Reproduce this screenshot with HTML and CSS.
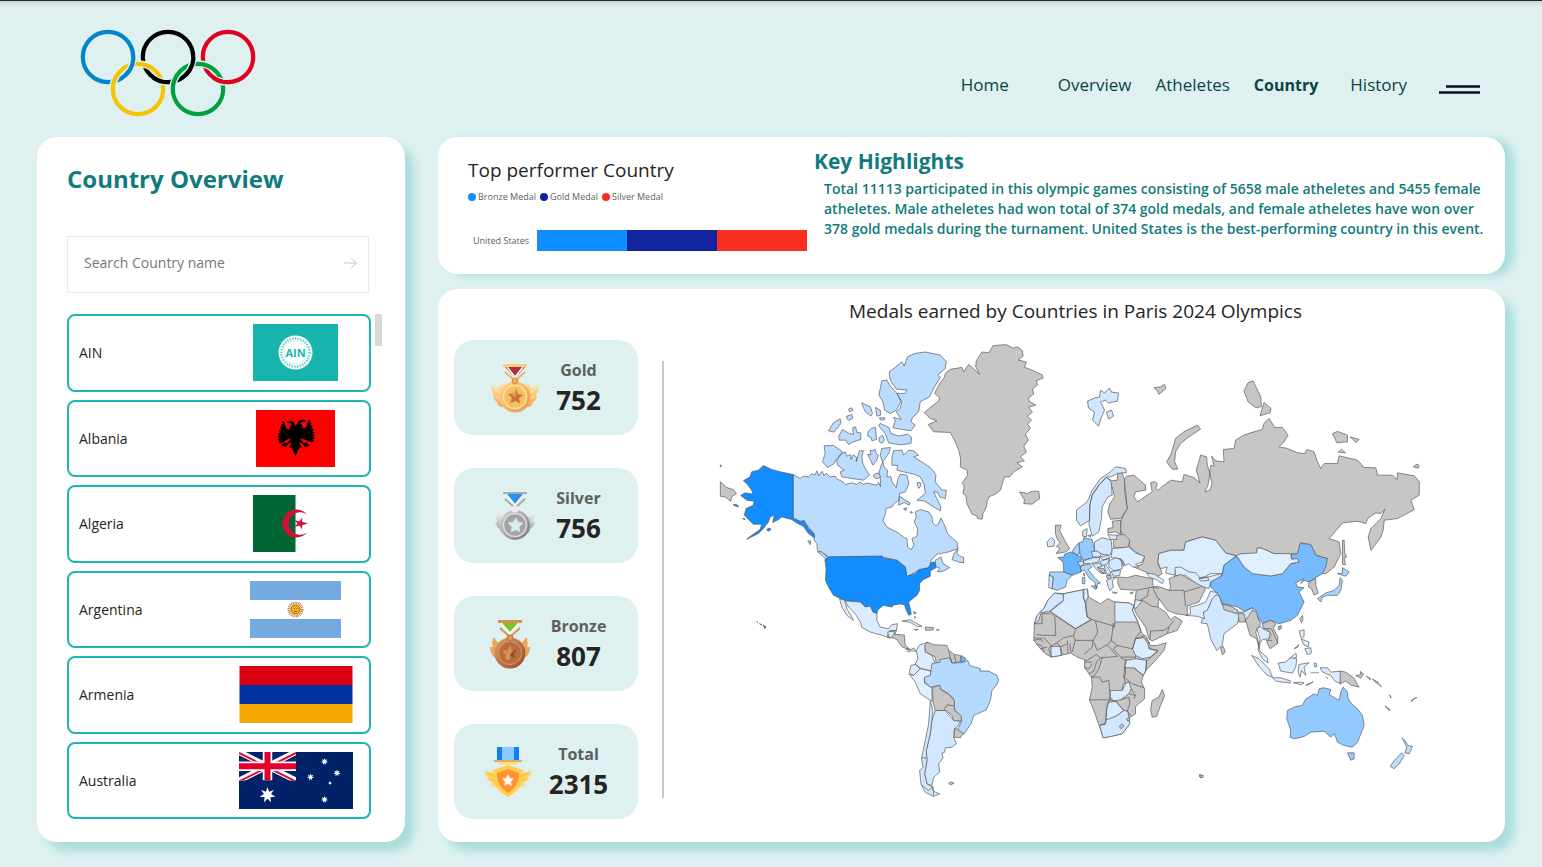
FILE: index.html
```html
<!DOCTYPE html>
<html lang="en">
<head>
<meta charset="utf-8">
<title>Country Overview</title>
<link rel="stylesheet" href="styles.css">
</head>
<body>
<div class="page">
  <header class="header">
    <svg class="rings" viewBox="80 29 176 88" role="img" aria-label="Olympic rings">
      <g fill="none" stroke-width="4.2">
        <circle cx="108" cy="57" r="25.2" stroke="#0485cb"/>
        <circle cx="168" cy="57" r="25.2" stroke="#000"/>
        <circle cx="228" cy="57" r="25.2" stroke="#e0001f"/>
        <circle cx="138" cy="89" r="25.2" stroke="#def1f0" stroke-width="7"/>
        <circle cx="198" cy="89" r="25.2" stroke="#def1f0" stroke-width="7"/>
        <circle cx="138" cy="89" r="25.2" stroke="#f6c300"/>
        <circle cx="198" cy="89" r="25.2" stroke="#00a03c"/>
        <g stroke="#def1f0" stroke-width="7">
          <path d="M132.9 55A25.2 25.2 0 0 1 129 71"/><path d="M192.9 55A25.2 25.2 0 0 1 189 71"/>
          <path d="M168 82.2A25.2 25.2 0 0 1 157 80"/><path d="M228 82.2A25.2 25.2 0 0 1 217 80"/>
        </g>
        <path stroke="#0485cb" d="M132.9 52.6A25.2 25.2 0 0 1 126 74.8"/>
        <path stroke="#000" d="M192.9 52.6A25.2 25.2 0 0 1 186 74.8M168.6 82.2A25.2 25.2 0 0 1 153.5 77.7"/>
        <path stroke="#e0001f" d="M228.6 82.2A25.2 25.2 0 0 1 213.5 77.7"/>
      </g>
    </svg>
    <nav class="nav">
      <a class="nav-home" href="#">Home</a>
      <a href="#">Overview</a>
      <a href="#">Atheletes</a>
      <a class="current" href="#">Country</a>
      <a class="nav-history" href="#">History</a>
      <button class="menu" type="button" aria-label="Menu">
        <svg viewBox="0 0 42 12"><path d="M7 2.5h34M0 8.5h41" stroke="#0b0b18" stroke-width="2.6"/></svg>
      </button>
    </nav>
  </header>

  <main class="board">
    <aside class="panel sidebar">
      <h1>Country Overview</h1>
      <form class="search">
        <input type="text" placeholder="Search Country name" aria-label="Search Country name">
        <button type="button" aria-label="Search"><svg viewBox="0 0 14 12"><path d="M0 6h12M7 1l5.500 5L7 11" fill="none" stroke="#c4c4c4"/></svg></button>
      </form>
      <div class="list-wrap">
        <ul class="countries">
          <li><span>AIN</span>
            <svg class="flag" viewBox="0 0 114 57"><path fill="#16b4ac" d="M14 0h85v57H14z"/><circle cx="56.500" cy="28.500" r="17" fill="#fff"/><circle cx="56.500" cy="28.500" r="14" fill="none" stroke="#16b4ac" stroke-width="2.600" stroke-dasharray="1.500 1.200" opacity=".6"/><circle cx="56.500" cy="28.500" r="11.500" fill="#fff" stroke="#9ddfdb" stroke-width=".5"/><text class="ain" x="56.500" y="32.500" text-anchor="middle">AIN</text></svg></li>
          <li><span>Albania</span>
            <svg class="flag" viewBox="0 0 114 57"><path fill="#f00" d="M17 0h79v57H17z"/>
              <path d="M56.500 16l-2-4-4-1.500-3 1 1 2 3-.5 1.500 2-2 2-1 3-3-2-2-7-2 1 1 2h-2l1 3h-2l1 3h-2l1 3-2 .2 1.500 2.800-2 .3 2 2.500-2 .5 2.500 2-2 1 3 1.200L49 29l3-.5-4 4.500-3-.5-3 4 3-1 1 2 4-4 3-1-3 5 2.500-.5.5 3 1.500-1v3l2 4 2-4v-3l1.500 1 .5-3 2.500.5-3-5 3 1 4 4 1-2 3 1-3-4-3 .5-4-4.500 3 .5 8.500 3.200 3-1.200-2-1 2.500-2-2-.5 2-2.500-2-.3 1.500-2.800-2-.2 1-3h-2l1-3h-2l1-3h-2l1-2-2-1-2 7-3 2-1-3-2-2 1.500-2 3 .5 1-2-3-1-4 1.500z"/></svg></li>
          <li><span>Algeria</span>
            <svg class="flag" viewBox="0 0 114 57"><path fill="#063" d="M14 0h42.500v57H14z"/><path fill="#d21034" d="M68 19.500a14 14 0 1 0 0 18a11.300 11.300 0 1 1 0-18zM69 28.500l-6-1.800.3-4.200-3 4-5-1.600 3.200 3.600-3.200 3.600 5-1.600 3 4-.3-4.200z"/></svg></li>
          <li><span>Argentina</span>
            <svg class="flag" viewBox="0 0 114 57"><path fill="#74aadf" d="M11 0h91v19H11zM11 38h91v19H11z"/><circle cx="56.500" cy="28.500" r="6.500" fill="none" stroke="#c08a4a" stroke-width="3" stroke-dasharray="1 .7"/><circle cx="56.500" cy="28.500" r="4.500" fill="#f6b40e" stroke="#a8620c"/><path d="M55 27.500h1m1.500 0h1M55 30.500h3" stroke="#85340a" stroke-width=".7"/></svg></li>
          <li><span>Armenia</span>
            <svg class="flag" viewBox="0 0 114 57"><path fill="#d90012" d="M.5 0h113v19H.5z"/><path fill="#0033a0" d="M.5 19h113v19H.5z"/><path fill="#f2a800" d="M.5 38h113v19H.5z"/></svg></li>
          <li><span>Australia</span>
            <svg class="flag" viewBox="0 0 114 57">
              <defs><clipPath id="canton"><path d="M0 0h57v28.500H0z"/></clipPath>
              <path id="star" d="M0-8l1.600 4.800L6.300-5 3.600-.9 7.800 1.800 2.900 2.300 3.500 7.200 0 3.700-3.500 7.200-2.900 2.300-7.800 1.800-3.600-.9-6.300-5-1.600-3.200z"/></defs>
              <path fill="#012169" d="M0 0h114v57H0z"/>
              <g clip-path="url(#canton)"><path d="M0 0l57 28.500M57 0L0 28.500" stroke="#fff" stroke-width="6"/><path d="M0 1l57 28.500M57 1L0 29.500" stroke="#e4002b" stroke-width="2"/><path d="M28.500 0v28.500M0 14.200h57" stroke="#fff" stroke-width="9.500"/><path d="M28.500 0v28.500M0 14.200h57" stroke="#e4002b" stroke-width="6"/></g>
              <g fill="#fff"><use href="#star" x="28.500" y="43"/><use href="#star" transform="translate(85.500 9.500) scale(.45)"/><use href="#star" transform="translate(98 21) scale(.45)"/><use href="#star" transform="translate(71.500 25) scale(.45)"/><use href="#star" transform="translate(91 31) scale(.25)"/><use href="#star" transform="translate(85.500 47.500) scale(.45)"/></g>
            </svg></li>
        </ul>
        <div class="thumb"></div>
      </div>
    </aside>

    <div class="content">
      <section class="panel highlights">
        <div class="chart">
          <h2>Top performer Country</h2>
          <ul class="legend">
            <li><i class="dot bronze"></i>Bronze Medal</li>
            <li><i class="dot gold"></i>Gold Medal</li>
            <li><i class="dot silver"></i>Silver Medal</li>
          </ul>
          <div class="bar-row">
            <span>United States</span>
            <div class="bar"><i class="bronze"></i><i class="gold"></i><i class="silver"></i></div>
          </div>
        </div>
        <div class="key">
          <h2>Key Highlights</h2>
          <p>Total 11113 participated in this olympic games consisting of 5658 male atheletes and 5455 female atheletes. Male atheletes had won total of 374 gold medals, and female atheletes have won over 378 gold medals during the turnament. United States is the best-performing country in this event.</p>
        </div>
      </section>

      <section class="panel medals">
        <div class="stats">
          <article class="stat">
            <svg class="medal" viewBox="0 0 50 50">
              <defs>
                <linearGradient id="gG" x2="1" y2="1"><stop stop-color="#ffd98a"/><stop offset="1" stop-color="#e8954a"/></linearGradient>
                <linearGradient id="gW" x2="0" y2="1"><stop stop-color="#ffe7a8"/><stop offset="1" stop-color="#f2ab55"/></linearGradient>
              </defs>
              <path fill="url(#gW)" d="M1 22c3 2 6 2 8 3l2-6 4 4 4-2h12l4 2 4-4 2 6c2-1 5-1 8-3 0 5-1 8-3 10l1 1c0 3-2 5-4 6 0 3-3 5-6 5H13c-3 0-6-2-6-5-2-1-4-3-4-6l1-1c-2-2-3-5-3-10z"/>
              <path fill="none" stroke="#fbf0c4" d="M3 24l8 7M5 33l6 3M47 24l-8 7M45 33l-6 3"/>
              <path fill="#f5cd7c" d="M13 1h24v3H13z"/><path fill="#b92e3c" d="M15 4h20L25 15z"/><path fill="none" stroke="#fff" stroke-width="1.500" d="M17 4l8 10 8-10"/><path fill="none" stroke="#edb462" stroke-width="2" d="M15 9l10 9 10-9"/>
              <circle cx="25" cy="34" r="15.500" fill="url(#gG)"/><circle cx="25" cy="34" r="11.500" fill="#f8bd62" stroke="#ffe09a" stroke-width="1.500"/><circle cx="25" cy="18" r="3" fill="#efae5b" stroke="#d28c40"/>
              <path fill="#c87537" d="M26 26l2 5 5 1-4 3 1 6-4-3-6 2 2-5-4-4 6 0z"/><path fill="#e59a4c" d="M26 34l-8-4 6 0 2-4z"/>
            </svg>
            <div><h3>Gold</h3><strong>752</strong></div>
          </article>
          <article class="stat">
            <svg class="medal" viewBox="0 0 50 50">
              <defs><linearGradient id="sG" x2="1" y2="1"><stop stop-color="#d8d8d8"/><stop offset="1" stop-color="#767676"/></linearGradient>
              <linearGradient id="sW" x2="0" y2="1"><stop stop-color="#f5f5f5"/><stop offset="1" stop-color="#999"/></linearGradient></defs>
              <path fill="url(#sW)" d="M5 21c3 3 6 3 8 6h24c2-3 5-3 8-6 0 5-1 8-3 10h3c-1 4-3 6-5 7 0 3-2 4-5 4H15c-3 0-5-1-5-4-2-1-4-3-5-7h3c-2-2-3-5-3-10z"/>
              <path fill="#aaa" d="M13 1h24v2H13z"/><path fill="#2a91ef" d="M15 3h20L25 14z"/><path fill="none" stroke="#fff" stroke-width="1.500" d="M16 3l9 11 9-11"/><path fill="none" stroke="#aaa" stroke-width="2" d="M15 8l10 9 10-9"/>
              <circle cx="25" cy="34" r="15" fill="url(#sG)"/><circle cx="25" cy="34" r="11.500" fill="#a3a3a3" stroke="#ddd" stroke-width="1.500"/><circle cx="25" cy="18" r="3.500" fill="#ededed"/>
              <path fill="#ddedf2" stroke="#c2dbe3" d="M26 27l2 4 5 1-4 4 1 5-4-2-5 2 1-5-4-4 5-1z"/>
            </svg>
            <div><h3>Silver</h3><strong>756</strong></div>
          </article>
          <article class="stat">
            <svg class="medal" viewBox="0 0 50 50">
              <defs><linearGradient id="bG" x2="1" y2="1"><stop stop-color="#e0a05e"/><stop offset="1" stop-color="#98482d"/></linearGradient></defs>
              <path fill="#e9a55c" d="M9 18c1 3 4 5 6 8h20c2-3 5-5 6-8 2 4 2 7 1 10h3c0 5-2 9-6 11H11c-4-2-6-6-6-11h3c-1-3-1-6 1-10z"/>
              <path fill="#d4924e" d="M13 1h24v3H13z"/><path fill="#7cc32c" d="M15 4h20L25 14z"/><path fill="none" stroke="#fff" stroke-width="1.500" d="M16 4l9 10 9-10"/><path fill="none" stroke="#d99449" stroke-width="2" d="M15 9l10 9 10-9"/>
              <circle cx="25" cy="34" r="15.500" fill="url(#bG)"/><circle cx="25" cy="34" r="11.500" fill="#b96b3d" stroke="#d99a62"/><circle cx="25" cy="19" r="3" fill="#dd9650" stroke="#b9743c"/>
              <path fill="#d59355" d="M25 26l2 5 1 1-3 4 0 5-5-1 1-4-4-4 6-1z"/><path fill="#9a4b2c" d="M28 32l4-2-3 5 1 5-5-4z"/>
            </svg>
            <div><h3>Bronze</h3><strong>807</strong></div>
          </article>
          <article class="stat">
            <svg class="medal" viewBox="0 0 50 50">
              <path fill="#ffd45e" d="M0 24l15 2v15l-7-3 2-2-7-4 3-1-5-4 3 0zM50 24l-15 2v15l7-3-2-2 7-4-3-1 5-4-3 0z"/>
              <path fill="none" stroke="#f3b73a" d="M4 26l11 5M7 32l8 4M46 26l-11 5M43 32l-8 4"/>
              <path fill="#0d7ff9" d="M14 0h22v14H14z"/><path fill="#8ac8ff" d="M19 0h12v14H19z"/><path fill="#e9ad62" d="M11 13h28v2H11z"/><path fill="#ffe08a" d="M13 15h24l-4 3H17z"/>
              <path fill="#ffcf4d" d="M25 18l15 5c0 14-4 21-15 27-11-6-15-13-15-27z"/><path fill="#ff9331" d="M25 22l11 4c0 9-3 15-11 20-8-5-11-11-11-20z"/><path fill="#fff3ee" d="M25 27l2 4 4 .5-3 3.500 1 4-4-2-4 2 1-4-3-3.500 4-.5z"/>
            </svg>
            <div><h3>Total</h3><strong>2315</strong></div>
          </article>
        </div>
        <div class="map-area">
          <h2>Medals earned by Countries in Paris 2024 Olympics</h2>
          <svg class="map" viewBox="719 343 702 456" role="img" aria-label="World map of medals">
            <!-- North America -->
            <g transform="translate(700 330) scale(.33333)">
              <g class="ca">
                <path d="M279 433L300 445 310 438 325 440 335 431 345 434 350 422 356 437 366 423 372 437 378 429 390 440 405 438 412 447 428 455 436 463 455 458 470 463 478 455 490 463 500 458 515 462 530 465 535 456 541 470 541 450 536 428 542 408 548 395 552 412 562 420 560 440 572 440 575 455 588 472 592 450 600 432 620 435 626 460 615 485 598 490 596 510 582 520 575 530 557 535 556 550 548 570 560 590 578 600 590 605 612 622 620 625 622 650 633 658 641 645 635 625 650 618 652 595 642 575 648 558 645 545 660 538 685 545 695 560 697 577 707 587 715 580 722 563 735 590 742 612 770 635 773 655 745 665 710 672 692 690 690 712 655 720 620 740 615 710 590 690 548 680 385 680 375 672 352 660 350 640 342 630 342 610 325 590 312 575 300 577 279 563z"/>
                <path d="M567 125L585 112 605 95 612 108 622 80 645 70 675 66 720 75 738 95 735 115 712 135 720 142 700 175 688 200 660 215 655 245 637 262 632 275 645 285 632 302 600 297 578 293 585 272 580 262 603 268 588 245 600 235 605 215 590 190 615 190 620 180 588 177 570 150z"/>
                <path d="M545 152L560 150 568 165 590 190 602 215 588 240 570 250 553 240 548 215 536 195zM484 218L510 230 517 250 512 258 495 245zM445 237L455 233 458 241 448 245zM440 258L455 253 458 265 446 271 440 266zM526 232L540 240 542 255 530 258zM538 263L553 263 552 270 540 269zM385 302L400 278 420 266 422 280 402 306zM416 318L427 298 447 310 460 313 457 294 466 290 470 307 482 308 482 328 460 335 445 343 437 330 417 330zM503 305L515 294 526 292 529 328 515 332 513 322 503 318zM535 287L540 280 566 292 572 310 595 318 622 312 634 322 632 340 600 344 565 338 555 310zM537 322L547 316 553 330 545 340 536 334zM372 347L400 346 427 365 410 385 402 400 382 412 367 395 375 370zM425 370L435 365 440 378 452 374 452 388 460 374 470 382 468 395 478 362 490 362 485 377 488 400 495 415 508 435 490 450 455 445 425 440 420 425 432 420 412 405 410 390zM502 372L512 375 510 360 520 362 524 357 528 370 534 375 530 390 518 405 510 388zM545 355L570 352 568 365 555 385 547 395 540 375zM522 432L535 428 541 440 530 446 520 440zM580 362L605 360 610 375 625 360 640 362 655 375 640 380 672 400 690 412 707 433 705 455 725 480 738 480 735 505 718 500 712 486 700 485 712 510 722 530 720 542 700 530 672 512 650 510 675 490 672 465 660 440 640 432 610 425 590 420 592 406 575 405 575 385zM650 458L660 457 662 468 655 475zM598 498L612 508 628 517 627 525 612 517 595 525zM610 535L620 533 616 542zM632 543L637 547 630 548zM705 690L722 680 728 700 740 707 748 712 730 722 712 725 718 712 707 710zM773 656L762 668 755 688 775 695 790 698 790 682 780 678 770 670zM323 632L332 632 330 643zM352 664L365 665 385 684 378 686z"/>
              </g>
              <path class="us" d="M190 406L215 418 240 425 279 433 279 563 300 573 312 571 325 595 342 612 342 622 325 610 310 588 290 578 275 568 245 560 235 568 218 577 223 555 210 560 205 575 190 595 175 610 140 627 155 615 180 598 185 582 160 582 150 572 133 555 138 535 160 525 162 513 140 510 122 496 135 488 158 492 155 480 140 460 130 452 150 440 155 425 175 420zM385 680L545 677 550 684 590 690 615 710 620 738 645 730 655 718 685 712 692 697 703 695 707 712 690 722 690 738 668 748 658 760 658 780 650 795 625 815 630 835 633 852 626 855 618 840 613 823 600 821 580 824 575 830 550 825 533 838 530 850 518 845 510 828 495 830 480 815 440 812 418 803 400 795 385 770 376 750 378 715 374 688zM100 522L112 524 116 530 102 526zM128 565h6v4zM200 597l10-4 2 6-8 4zM190 884l7 5-3 6zM170 874l4 2zM178 880l8 4z"/>
              <path class="l2" d="M418 805L440 812 480 815 495 830 510 828 518 845 530 850 530 870 540 890 565 895 575 883 592 880 588 902 570 900 560 920 540 913 510 905 484 890 482 878 465 850 445 830 434 812 440 835 458 865 460 870 440 855 425 830z"/>
              <path class="none" d="M900 45L918 44 938 54 952 51 966 62 968 78 954 90 978 96 972 112 988 117 1026 135 1028 144 1008 152 1011 165 996 177 1000 192 984 204 987 214 1006 225 985 232 996 246 981 258 993 270 982 282 990 295 975 312 984 330 970 348 978 366 960 380 972 392 950 398 966 410 940 425 928 440 912 440 900 480 888 490 866 500 860 515 858 530 848 550 845 567 832 565 828 556 815 552 800 520 796 495 788 490 792 465 785 460 802 435 800 420 780 410 781 385 775 360 765 335 750 307 700 305 684 283 710 272 690 265 672 248 690 232 715 213 718 203 703 190 718 160 732 142 735 130 750 118 785 112 790 125 805 103 838 133 826 110 828 92 845 66 865 68 878 47zM61 455L80 472 100 478 109 490 95 500 92 514 75 500 61 498zM61 404l4 3-4 4z"/>
            </g>

            <!-- South and Central America -->
            <g transform="translate(880 600) scale(.33333)">
              <path class="none" d="M30 92L48 90 44 102 72 104 75 135 90 147 80 145 66 140 50 118 38 112 22 112 24 102zM102 87h12l-8 3zM135 80l25 2-2 7-22 1zM168 88h8v2zM100 34l8 4-6 3zM104 48v6zM140 125L160 133 200 135 205 150 222 162 240 165 243 183 215 188 190 185 168 190 165 170 135 155 133 135zM205 548l8-4 8 4-10 5zM957 523l10 3-4 6-6-3z"/>
              <path class="l2" d="M22 95L40 92 42 102 28 114zM78 145l10 4 12-6 8 10-14-2-10 4zM66 62L90 58 125 78 110 78 90 66z"/>
              <path class="l2" d="M118 133L130 130 142 126 133 135 135 155 155 165 165 190 155 212 120 203 105 190 113 175 108 150zM92 195L105 192 120 205 100 225 87 218z"/>
              <path class="l3" d="M87 222L100 225 120 205 152 212 150 228 132 235 133 248 155 262 155 303 120 280 105 245z"/>
              <path class="fr" d="M243 165L257 175 250 187 241 183z"/>
              <path class="br" d="M155 190L180 185 178 178 207 172 215 188 243 187 262 180 268 195 300 205 300 212 325 212 350 225 355 240 350 252 335 270 330 300 318 328 280 345 272 370 250 402 232 388 243 365 235 345 222 325 220 295 205 280 180 265 178 255 150 260 133 245 133 230 150 225z"/>
              <path class="none" d="M157 262L178 254 182 268 205 282 222 300 222 315 222 330 242 345 244 362 220 362 215 345 197 330 165 330 158 305zM224 382L248 398 240 412 220 410z"/>
              <path class="line" d="M190 330L200 313 222 316M205 150L210 170 215 188M222 162L226 185"/>
              <path class="l1" d="M165 330L195 330 220 360 240 362 232 378 222 385 220 410 228 430 215 440 195 442 193 455 185 458 188 472 175 490 178 515 160 530 155 555 140 550 133 520 140 480 138 450 150 400 155 360z"/>
              <path class="l1" d="M150 303L158 330 150 400 138 450 140 480 133 520 140 550 155 558 160 572 178 580 160 588 135 575 122 550 118 510 128 500 124 472 133 430 145 370z"/><path class="line" d="M124 553L145 570 158 557 160 586M124 472H138"/>
            </g>

            <!-- Africa -->
            <g transform="translate(1020 580) scale(.33333)">
              <path class="none" d="M102 38L130 40 190 28 202 28 203 50 240 70 262 55 283 65 325 68 340 75 335 90 350 120 362 155 385 185 388 196 410 195 437 187 430 210 405 240 378 268 368 285 362 305 372 325 372 355 345 378 345 400 325 412 328 430 305 460 270 468 248 472 238 440 232 425 222 395 207 358 215 320 213 290 192 262 193 238 170 230 150 218 122 225 92 230 75 220 60 205 40 180 42 130 50 105 70 85 82 60zM425 327L432 345 420 375 408 408 395 410 390 388 395 360 415 350z"/>
              <path class="l1" d="M102 38L128 42 130 60 105 78 88 93 62 97 55 120 42 130 50 105 70 85 82 60z"/>
              <path class="l2" d="M130 40L190 28 190 55 197 80 200 110 212 118 165 145 90 93 128 62zM188 28L200 25 203 50 195 65 188 50zM283 65L325 68 340 75 335 90 352 125 283 125z"/>
              <path class="l2" d="M92 198L120 198 122 225 92 230zM345 175L370 172 382 190 386 205 412 210 390 230 365 235 345 225 336 205zM315 240L345 235 378 240 376 268 368 285 340 262 312 262z"/>
              <path class="l2" d="M270 330L305 330 308 310 325 305 332 325 325 340 300 358 280 362 268 350zM260 367L285 362 310 390 290 405 270 415 256 418 258 390z"/>
              <path class="l1" d="M237 435L252 432 256 418 275 412 290 405 310 390 322 392 328 430 305 460 270 468 248 472z"/>
              <path class="none" d="M296 438l8-8 6 6-8 9zM318 415l6-4 4 6-6 5z"/>
              <path class="line" d="M42 130H65V100H88M88 93L103 108 106 165H68L48 162M103 105L165 145 160 165 130 172 108 188 92 198M165 145L212 118M197 65L195 80 200 110 215 118 283 138V125M225 122L232 155 218 180H165L160 168M278 138L272 180 262 192 230 210 220 185M352 127L362 152 346 172 336 205 310 200 290 195 270 178M278 127V145M345 175L375 165 388 192M386 200L386 205 412 212 380 240M378 240L376 268M345 225L345 235M290 195L278 205 300 230 345 230M262 195L290 228 240 232 228 222 200 240H193M218 180L215 200 190 222M165 178L155 215M148 190L152 218M142 195V218M122 198L142 190 140 180M110 188L120 200 125 222M68 170L92 195 85 205 92 230M40 180L60 175 68 185M48 190L62 195 72 215M60 205L80 200M42 172L65 175M245 232L235 265 222 285 213 290M240 232L228 245 220 272 205 280M193 245H215M192 262L205 265 215 250M300 232L318 240 312 262 310 290 315 310 305 330M213 290L238 290 245 305 265 300 267 325 270 358M207 358H260L285 362M268 350L258 390 256 430 240 432M315 260V285L308 290M340 262L368 285M310 290L335 310 370 322M332 325L345 345 340 355M300 358L325 350 328 370 320 392 330 405M310 390L285 362M325 340L345 345"/>
            </g>

            <!-- Svalbard -->
            <path class="l1 fine" d="M1087 401L1094 398 1099 397 1100 390 1104 393 1109 388 1111 392 1118 393 1117 401 1108 403 1105 400 1100 402 1104 410 1101 417 1098 426 1092 420 1094 412 1088 408zM1106 412L1111 410 1113 416 1108 419z"/>

            <!-- Asia -->
            <g transform="translate(1150 340) scale(.33333)">
              <path class="none" d="M-72 408L-50 405 -15 435 -15 450 -45 455 -50 470 -40 485 -25 475 5 455 0 428 12 424 20 430 15 445 22 450 40 435 60 420 95 425 100 403 130 412 148 428 137 390 150 345 168 350 170 375 178 400 172 435 163 455 178 450 184 430 177 400 180 375 190 378 183 348 195 362 220 365 218 328 250 325 255 300 280 285 300 278 335 268 340 250 355 235 372 262 395 262 412 285 400 305 385 320 410 325 440 338 462 340 468 328 490 335 500 365 510 385 520 370 560 370 565 347 620 360 640 382 675 383 680 405 725 405 738 418 740 398 790 407 805 425V465L780 480 790 508 740 535 700 540 697 570 690 590 672 615 660 630 652 590 660 565 690 535 702 507 690 520 675 518 650 535 645 550 620 543 575 548 535 595 565 605 570 640 550 680 525 700 515 700 530 655 495 645 480 615 450 607 440 640 420 642 370 640 335 625 320 622 318 640 275 640 257 647 225 638 195 600 155 590 105 605 100 630 60 630 25 640 22 670 35 700 10 715 -15 695 -50 680 -25 672 -18 650 -45 635 -62 620 -65 600 -85 585 -90 565 -88 540 -70 505 -75 450 -80 420z"/>
              <path class="none" d="M280 153L292 128 307 122 330 170 332 200 315 203 292 185zM328 227L340 187 361 205 358 218zM545 280L560 274 590 285 590 305 558 308zM598 290L625 298 615 307zM562 336L572 327 584 338zM787 380L798 372 805 376 802 384zM10 143L30 140 42 133 46 145 25 163 20 152zM48 365L62 340 75 295 100 275 140 255 150 267 115 290 90 310 75 335 72 365 82 387 65 387zM575 600L580 600 582 640 588 650 580 652 584 673 575 672z"/>
              <path class="l2" d="M25 640L60 630 100 630 105 605 155 590 195 600 225 638 257 647 220 675 215 700 180 700 165 708 140 715 115 695 75 682 73 705 45 698 50 680 30 685 22 665z"/>
              <path class="l2" d="M73 682L90 680 115 695 135 697 150 715 215 700 205 715 180 725 175 745 145 735 130 725 105 705 75 706z"/>
              <path class="line" d="M145 715L170 710 175 720 150 722z"/>
            </g>
            <g transform="translate(1180 560) scale(.33333)">
              <path class="cn" d="M90 65L125 45 130 15 167 -13 190 20 215 40 270 47 305 40 330 10 355 5 350 -5 332 -3 332 -18 350 -20 358 -50 390 -48 405 -15 440 -5 435 20 425 40 400 55 385 65 370 60 360 70 368 55 345 68 350 80 370 82 355 95 370 125 350 165 330 180 295 190 270 180 245 188 230 170 225 150 215 142 190 152 170 140 125 130 115 105 90 80zM292 200l8-5 3 8-8 6z"/>
              <path class="l3" d="M167 -15L185 -20 228 -22 230 -38 245 -35 280 -20 330 -20 332 -3 350 -5 355 5 330 10 305 40 270 47 215 40 190 20z"/>
              <path class="l1" d="M65 175L70 150 85 140 95 105 115 105 125 135 170 155 190 155 215 142 218 155 200 180 178 165 170 190 130 220 125 255 108 270 90 235 80 190 62 188z"/>
              <path class="l2" d="M15 165L30 160 28 140 50 135 75 125 90 92 112 98 95 115 80 150 68 155 72 175 50 168z"/>
              <path class="none" d="M125 132L145 135 172 150 168 160 130 148zM172 158L190 160 195 185 175 185zM195 180L215 150 228 155 232 175 240 190 225 215 232 240 235 265 228 235 208 225zM245 190L270 180 285 190 278 205 292 230 290 250 268 265 258 245 272 225 258 205 248 205zM120 262L128 258 134 275 125 283zM385 65L405 55 405 75 412 98 400 105 392 85 383 80zM357 175L365 165 367 178 362 187zM340 265l14-12-4 8zM475 332L495 335 518 352 535 380 512 375 495 362 478 370zM525 345L540 342 538 333 548 340 540 353zM556 347l14 8-2 3zM575 356l18 10-2 6zM594 370l8 10zM626 403l5 10zM612 436l16 12-4 2zM690 420l6-2-2 5zM696 417l12-6zM57 642l12 4-4 6-6-2z"/>
              <path class="line" d="M248 205L272 205 292 250M255 240L275 240"/>
              <path class="l2" d="M228 205L240 198 250 208 268 215 265 235 245 238 238 248 235 270 260 292 262 308 245 295 232 268 238 235zM355 212L370 208 370 228 362 235zM362 236L385 245 382 260 368 252zM372 265L390 262 392 278 380 283zM325 295L345 278 348 290 330 300z"/>
              <path class="l2" d="M213 285L235 295 265 325 275 350 260 345 235 318zM275 352L300 352 330 362 328 368 285 362zM338 367l20-2 12 2-8 6zM375 374l22-10-12 8zM292 308L315 305 330 292 348 295 345 320 335 338 300 332zM355 312L385 307 370 320 375 345 362 330 358 350 352 335zM400 308l6 0 2 10-6 2zM390 337h25M437 350l4 4zM418 322L440 322 450 335 478 332V370L460 360 450 345 425 335z"/>
              <path class="jp" d="M470 40L485 38 485 22 505 35 495 48zM478 52L485 60 480 90 470 105 440 105 425 110 420 125 410 115 435 98 460 90 475 75z"/>
              <path class="au" d="M320 450L345 438 365 435 375 415 388 408 400 400 410 405 415 385 428 382 450 387 445 402 475 420 480 395 487 380 500 395 502 415 512 430 530 445 545 465 550 495 540 520 530 545 515 560 490 555 470 545 465 530 460 520 450 530 430 512 390 515 370 528 340 535 328 530 330 510 318 475zM500 577l20 0 0 18-10 4z"/>
              <path class="nz" d="M663 532L672 540 682 555 695 558 685 580 672 577 678 560zM662 577L670 585 655 610 640 624 628 618 640 600z"/>
            </g>

            <!-- Europe and the Middle East -->
            <g transform="translate(1020 440) scale(.33333)">
              <path class="none" d="M-3 155L20 160 35 153 55 153 58 175 35 192 10 190 12 178zM105 255L122 255 118 270 125 285 135 305 148 325 135 335 107 340 118 325 108 318 120 305 112 300 105 280zM258 112L275 122 290 120 292 98 305 98 312 120 312 150 320 205 302 235 270 237 262 215 268 190 282 170 275 140zM275 243L300 240 300 282 285 275 262 278 262 265 278 262zM290 285L310 282 328 300 322 322 280 322 278 305z"/>
              <path class="none" d="M292 410L320 412 345 405 395 415 398 440 412 438 445 450 450 440 445 415 480 402 530 430 555 445 550 455 535 485 500 497 500 525 465 520 440 510 415 475 412 500 435 515 450 538 462 528 485 542 470 570 440 580 395 602 385 595 375 560 350 525 340 505 347 450 300 447 292 430z"/>
              <path class="line" d="M347 450L398 440 400 450 412 475M350 485L380 468 385 445M345 485L365 480 395 498 412 500M400 440L415 445M445 450L490 450 495 497M490 455L540 440M388 598L390 572 430 570 445 560 440 580M445 560L460 540"/>
              <path class="l1" d="M168 210L200 185 215 150 240 115 270 95 285 80 315 85 318 97 305 98 290 100 272 110 258 110 235 135 215 165 208 195 207 240 180 257 168 240zM207 240L208 195 215 165 235 135 258 112 272 125 275 165 262 170 245 200 243 235 235 275 215 288 205 250z"/>
              <path class="l1" d="M187 272L200 265 198 290 187 288zM202 286l8-2 0 7zM82 320L80 305 92 292 103 300 100 318zM222 305L245 292 272 300 275 330 268 345 245 342 222 332zM262 283L290 285 288 298 270 298z"/>
              <path class="l2" d="M275 325L325 320 345 338 372 348 365 365 345 372 355 380 335 380 325 370 308 378 300 355 272 352z"/>
              <path class="fr" d="M112 352L130 350 132 342 150 335 165 342 185 352 178 368 182 395 155 405 130 395 128 365z"/>
              <path class="jp" d="M88 395L130 395 155 405 140 420 135 440 110 450 95 445 98 410 86 405z"/>
              <path class="l1" d="M86 405L98 410 95 445 85 442z"/>
              <path class="au" d="M175 308L188 303 190 292 215 298 222 330 218 352 188 360 178 340z"/>
              <path class="jp" d="M160 325L175 308 178 335 172 345 155 335zM180 378L205 370 215 380 203 388 225 415 240 428 232 430 228 445 222 425 205 412 192 390 182 393zM212 437L228 437 226 447zM186 412h7v18h-7zM188 400h4v8z"/>
              <path class="l1" d="M212 335L228 332 245 342 235 350 218 350zM188 362L218 352 238 352 235 365 210 370 190 370zM238 350L262 345 268 352 248 360zM238 365L250 358 268 355 260 372 245 375zM265 362L285 353 303 358 305 385 280 392 265 380zM272 393L300 390 298 405 278 408zM172 365L188 362 190 372 178 378z"/>
              <path class="none" d="M232 382L250 385 255 400 240 398zM298 358L308 362 312 375zM258 405L272 405 270 418 260 415z"/>
              <path class="l1" d="M250 375L260 380 270 395 268 405 258 400zM215 372L238 368 245 378 230 382 250 400 232 392zM258 420L275 412 290 410 275 420 278 440 268 452 262 435zM275 455l15 2-8 3zM328 458l10-3-4 6z"/>
              <path class="l2" d="M378 398L402 402 430 420 425 430 408 418 388 412zM345 478L365 482 345 505 340 498z"/>
            </g>
          </svg>
        </div>
      </section>
    </div>
  </main>
</div>
</body>
</html>
```
FILE: styles.css
```css
* { box-sizing: border-box; }
body, h1, h2, h3, p, ul { margin: 0; padding: 0; }
ul { list-style: none; }
body {
  background: #def1f0;
  color: #252423;
  font-family: "Open Sans", "Noto Sans", sans-serif;
}
.page {
  display: flex;
  flex-direction: column;
  min-height: 100vh;
  padding: 0 37px 25px;
  border-top: 1px solid #2a2629;
  background: linear-gradient(#c6d6d6, #def1f0 6px);
}
.header {
  display: flex;
  justify-content: space-between;
  align-items: flex-start;
  height: 136px;
  padding: 28px 24px 0 43px;
}
.rings { width: 176px; height: 88px; }
.nav {
  display: flex;
  align-items: center;
  gap: 24px;
  padding-top: 44px;
}
.nav a {
  color: #0b4345;
  font-size: 17px;
  font-weight: 500;
  line-height: 24px;
  text-decoration: none;
}
.nav .nav-home { padding-right: 25px; }
.nav .nav-history { padding: 0 8px; }
.nav .current { font-size: 16px; font-weight: 700; }
.menu { padding: 10px 0 0; border: 0; background: none; }
.menu svg { display: block; width: 42px; height: 12px; }
.board {
  display: grid;
  grid-template-columns: 368px 1fr;
  gap: 33px;
  flex: 1;
}
.panel {
  border-radius: 20px;
  background: #fff;
  box-shadow: 9px 9px 8px #aadddb;
}
.sidebar {
  display: flex;
  flex-direction: column;
  padding: 24px 22px 23px 30px;
}
.sidebar h1 {
  color: #117a7c;
  font-size: 24px;
  line-height: 36px;
}
.search {
  display: flex;
  align-items: center;
  width: 302px;
  height: 57px;
  margin-top: 39px;
  padding: 0 10px 4px 16px;
  border: 1px solid #eaeaea;
}
.search input {
  flex: 1;
  min-width: 0;
  padding: 0;
  border: 0;
  outline: 0;
  font: 14px "Open Sans", sans-serif;
}
.search input::placeholder { color: #777; opacity: 1; }
.search button { padding: 0; border: 0; background: none; }
.search svg { display: block; width: 14px; height: 12px; }
.list-wrap {
  display: flex;
  flex: 1;
  gap: 4px;
  margin-top: 21px;
}
.countries {
  display: grid;
  grid-auto-rows: 1fr;
  gap: 8px;
  width: 304px;
}
.countries li {
  display: flex;
  align-items: center;
  justify-content: space-between;
  padding: 0 16px 0 10px;
  border: 2px solid #1fb5b5;
  border-radius: 8px;
  font-size: 14px;
}
.flag { width: 114px; height: 57px; }
.ain {
  fill: #16b4ac;
  font: 700 11px "Open Sans", sans-serif;
}
.thumb { width: 7px; height: 32px; background: #d9d8d7; }
.content {
  display: grid;
  grid-template-rows: 137px 1fr;
  gap: 15px;
}
.highlights {
  display: grid;
  grid-template-columns: 339px 1fr;
  gap: 7px;
  padding: 10px 8px 10px 30px;
  box-shadow: 9px 2px 8px #aadddb;
}
.chart { padding-top: 10px; }
.chart h2, .map-area h2 {
  font-size: 19px;
  font-weight: 500;
  line-height: 26px;
}
.legend {
  display: flex;
  gap: 4px;
  margin-top: 7px;
  color: #605e5c;
  font-size: 9px;
  line-height: 14px;
}
.legend li { display: flex; align-items: center; gap: 2px; }
.dot { width: 8px; height: 8px; border-radius: 50%; }
.bronze { background: #118dff; }
.gold { background: #12239e; }
.silver { background: #fa2f20; }
.bar-row {
  display: flex;
  align-items: center;
  justify-content: space-between;
  margin-top: 26px;
  padding-left: 5px;
  color: #605e5c;
  font-size: 9px;
}
.bar { display: grid; grid-template-columns: repeat(3, 1fr); width: 270px; height: 21px; }
.key h2 {
  color: #117a7c;
  font-size: 21px;
  line-height: 28px;
}
.key p {
  padding: 4px 0 0 10px;
  color: #117a7c;
  font-size: 14px;
  font-weight: 600;
  line-height: 20px;
}
.medals {
  display: grid;
  grid-template-columns: 184px 1fr;
  gap: 24px;
  padding: 9px 16px 23px;
}
.stats {
  display: grid;
  grid-auto-rows: 1fr;
  gap: 33px;
  padding-top: 42px;
}
.stat {
  display: grid;
  grid-template-columns: minmax(0, 1fr) auto minmax(0, 1fr);
  align-items: center;
  gap: 16px;
  padding-left: 65px;
  border-radius: 20px;
  background: #def1f0;
  text-align: center;
}
.medal { justify-self: end; width: 50px; height: 50px; }
.stat h3 {
  color: #605e5c;
  font-size: 16px;
  line-height: 24px;
}
.stat strong {
  display: block;
  font-size: 26px;
  line-height: 36px;
}
.map-area {
  display: flex;
  flex-direction: column;
  align-items: center;
  gap: 19px;
  background: linear-gradient(#c8c8c8, #c8c8c8) 0 63px / 2px 437px no-repeat;
}
.map { width: 85%; height: auto; margin-right: 10px; }
.map path {
  stroke: #555;
  stroke-width: 2;
  stroke-linejoin: round;
}
.map .fine { stroke-width: .7; }
.map .none { fill: #c8c6c4; }
.map .line { fill: none; }
.map .us { fill: #118dff; }
.map .ca path { fill: #badcff; }
.map .cn { fill: #76bbff; }
.map .fr { fill: #66b5ff; }
.map .au { fill: #92caff; }
.map .jp { fill: #a6d3ff; }
.map .br { fill: #b4daff; }
.map .nz { fill: #badcff; }
.map .l1 { fill: #d0e7ff; }
.map .l2 { fill: #daecff; }
.map .l3 { fill: #e0f0ff; }
```
